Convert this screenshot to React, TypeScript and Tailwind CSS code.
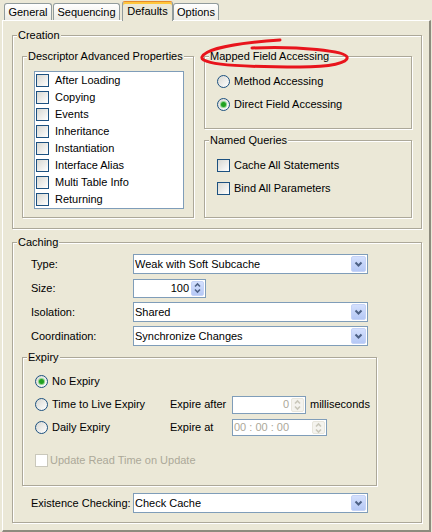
import React from 'react';

const BG = 'bg-[#ebe8d7]';

const Check = ({ disabled }: { disabled?: boolean }) => (
  <span
    className={`block w-[13px] h-[13px] shrink-0 border ${
      disabled
        ? 'border-[#cac8bb] bg-white'
        : 'border-[#1c5180] bg-linear-to-br from-[#d8d8d2] to-white'
    }`}
  />
);

const Radio = ({ checked }: { checked?: boolean }) => (
  <span className="flex items-center justify-center w-[13px] h-[13px] shrink-0 rounded-full border border-[#1c5180] bg-linear-to-br from-[#d8d8d2] to-white">
    {checked && (
      <span className="block w-[5px] h-[5px] rounded-full bg-[#21a121] shadow-[0_0_0_1px_#8fd48f]" />
    )}
  </span>
);

const Chevron = ({ up, color = '#4d6185', small }: { up?: boolean; color?: string; small?: boolean }) =>
  small ? (
    <svg width="11" height="6" viewBox="0 0 11 6">
      <path
        d={up ? 'M3 4.5 L5.5 2 L8 4.5' : 'M3 1.5 L5.5 4 L8 1.5'}
        stroke={color}
        strokeWidth="1.6"
        fill="none"
      />
    </svg>
  ) : (
    <svg width="13" height="14" viewBox="0 0 13 14">
      <path d="M3.5 5.5 L6.5 8.5 L9.5 5.5" stroke={color} strokeWidth="2" fill="none" />
    </svg>
  );

const Select = ({ value }: { value: string }) => (
  <div className="flex items-center w-[235px] h-[20px] border border-[#7f9db9] bg-white">
    <span className="flex-1 pl-[1px] leading-[18px] whitespace-nowrap">{value}</span>
    <span className="flex items-center justify-center w-[15px] h-[16px] mr-[1px] rounded-[2px] border border-[#c5d3f7] bg-linear-to-b from-[#d4e0fd] to-[#b5c8f5]">
      <Chevron />
    </span>
  </div>
);

const Spinner = ({
  value,
  width,
  height,
  disabled,
  left,
}: {
  value: string;
  width: string;
  height: string;
  disabled?: boolean;
  left?: boolean;
}) => (
  <div className={`flex items-stretch ${width} ${height} border border-[#7f9db9] bg-white`}>
    <span
      className={`flex-1 flex items-center ${left ? 'justify-start pl-[1px]' : 'justify-end pr-[2px]'} ${
        disabled ? 'text-[#aca899]' : ''
      } whitespace-nowrap`}
    >
      {value}
    </span>
    <span
      className={`flex flex-col justify-center w-[13px] my-[1px] mr-[1px] rounded-[2px] border ${
        disabled ? 'border-[#e8e6dc] bg-[#f4f3ee]' : 'border-[#c5d3f7] bg-linear-to-b from-[#d4e0fd] to-[#b5c8f5]'
      }`}
    >
      <span className="flex justify-center">
        <Chevron small up color={disabled ? '#c9c7ba' : '#4d6185'} />
      </span>
      <span className="flex justify-center">
        <Chevron small color={disabled ? '#c9c7ba' : '#4d6185'} />
      </span>
    </span>
  </div>
);

const Group = ({
  title,
  className = '',
  children,
}: {
  title: string;
  className?: string;
  children?: React.ReactNode;
}) => (
  <div className={`border border-[#aca899] shadow-[inset_1px_1px_0_#fff,1px_1px_0_#fff] ${className}`}>
    <div className={`-mt-[7px] ml-[4px] w-fit px-[1px] leading-[13px] ${BG}`}>{title}</div>
    {children}
  </div>
);

const Tab = ({ label, w, selected, ml }: { label: string; w: string; selected?: boolean; ml: string }) =>
  selected ? (
    <div
      className={`relative z-10 ${ml} ${w} h-[20px] -mb-[1px] flex items-center justify-center rounded-t-[3px] border-x border-t border-x-[#919b9c] border-t-[#e68b2c] shadow-[inset_0_2px_0_#ffc73c] ${BG}`}
    >
      {label}
    </div>
  ) : (
    <div
      className={`${ml} ${w} h-[17px] pt-[1px] flex items-center justify-center rounded-t-[3px] border-x border-t border-[#919b9c] bg-linear-to-b from-white to-[#ecebe4]`}
    >
      {label}
    </div>
  );

const descriptorItems = [
  'After Loading',
  'Copying',
  'Events',
  'Inheritance',
  'Instantiation',
  'Interface Alias',
  'Multi Table Info',
  'Returning',
];

const cachingRows = [
  { label: 'Type:', value: 'Weak with Soft Subcache' },
  { label: 'Size:', value: '100', spinner: true },
  { label: 'Isolation:', value: 'Shared' },
  { label: 'Coordination:', value: 'Synchronize Changes' },
];

export default function App() {
  return (
    <div
      className={`relative w-[432px] h-[532px] overflow-hidden ${BG} text-black text-[11px] leading-[13px] font-['Liberation_Sans',Arial,sans-serif]`}
    >
      {/* tabs */}
      <div className="flex items-end h-[20px] pl-[4px]">
        <Tab label="General" w="w-[48px]" ml="ml-0" />
        <Tab label="Sequencing" w="w-[67px]" ml="ml-[1px]" />
        <Tab label="Defaults" w="w-[51px]" ml="ml-[2px]" selected />
        <Tab label="Options" w="w-[46px]" ml="ml-0" />
      </div>

      {/* tab page */}
      <div className="ml-[2px] w-[429px] h-[512px] border-l border-t border-white border-r-2 border-b-2 border-r-[#8d8b7e] border-b-[#8d8b7e] pt-[14px] pl-[9px] pr-[7px]">
        <Group title="Creation" className="pb-[10px]">
          <div className="flex gap-[10px] mt-[14px] px-[9px]">
            <Group title="Descriptor Advanced Properties" className="w-[172px] pb-[8px]">
              <div className="mt-[8px] ml-[11px] w-[150px] border border-[#7f9db9] bg-white">
                {descriptorItems.map((item) => (
                  <div key={item} className="flex items-center gap-[6px] h-[17px] pl-[1px]">
                    <Check />
                    <span>{item}</span>
                  </div>
                ))}
              </div>
            </Group>
            <div className="flex flex-col w-[208px]">
              <Group title="Mapped Field Accessing" className="pt-0 pb-[12px]">
                <div className="pt-[7px] pl-[12px]">
                  <div className="flex items-center gap-[4px] h-[23px]">
                    <Radio />
                    <span>Method Accessing</span>
                  </div>
                  <div className="flex items-center gap-[4px] h-[23px]">
                    <Radio checked />
                    <span>Direct Field Accessing</span>
                  </div>
                </div>
              </Group>
              <Group title="Named Queries" className="mt-[11px] flex-1">
                <div className="pt-[7px] pl-[12px]">
                  <div className="flex items-center gap-[4px] h-[23px]">
                    <Check />
                    <span>Cache All Statements</span>
                  </div>
                  <div className="flex items-center gap-[4px] h-[23px]">
                    <Check />
                    <span>Bind All Parameters</span>
                  </div>
                </div>
              </Group>
            </div>
          </div>
        </Group>

        <Group title="Caching" className="mt-[13px] pb-[9px]">
          <div className="flex flex-col gap-[4px] pt-[5px]">
            {cachingRows.map((row) => (
              <div key={row.label} className="flex items-center h-[20px] pl-[18px]">
                <span className="w-[102px]">{row.label}</span>
                {row.spinner ? (
                  <Spinner value={row.value} width="w-[73px]" height="h-[19px]" />
                ) : (
                  <Select value={row.value} />
                )}
              </div>
            ))}
          </div>

          <Group title="Expiry" className="mt-[11px] ml-[9px] w-[355px] pb-[15px]">
            <div className="pt-[6px] pl-[12px]">
              <div className="flex items-center h-[23px]">
                <div className="flex items-center gap-[4px] w-[135px]">
                  <Radio checked />
                  <span>No Expiry</span>
                </div>
              </div>
              <div className="flex items-center h-[23px]">
                <div className="flex items-center gap-[4px] w-[135px]">
                  <Radio />
                  <span>Time to Live Expiry</span>
                </div>
                <span className="w-[62px]">Expire after</span>
                <Spinner value="0" width="w-[74px]" height="h-[18px]" disabled />
                <span className="ml-[4px]">milliseconds</span>
              </div>
              <div className="flex items-center h-[23px]">
                <div className="flex items-center gap-[4px] w-[135px]">
                  <Radio />
                  <span>Daily Expiry</span>
                </div>
                <span className="w-[62px]">Expire at</span>
                <Spinner value="00 : 00 : 00" width="w-[95px]" height="h-[17px]" disabled left />
              </div>
              <div className="flex items-center gap-[2px] h-[20px] mt-[11px] text-[#aca899]">
                <Check disabled />
                <span>Update Read Time on Update</span>
              </div>
            </div>
          </Group>

          <div className="flex items-center h-[20px] mt-[7px] pl-[18px]">
            <span className="w-[102px]">Existence Checking:</span>
            <Select value="Check Cache" />
          </div>
        </Group>
      </div>

      {/* red hand-drawn annotation */}
      <svg className="absolute left-0 top-0 pointer-events-none" width="432" height="100" viewBox="0 0 432 100">
        <path
          d="M280 40 C250 42, 206 47, 202 57 C199 66, 260 67, 300 67 C330 67, 349 63, 347 57 C345 51, 300 46, 252 48"
          stroke="#e8141c"
          strokeWidth="3"
          fill="none"
          strokeLinecap="round"
        />
      </svg>
    </div>
  );
}
